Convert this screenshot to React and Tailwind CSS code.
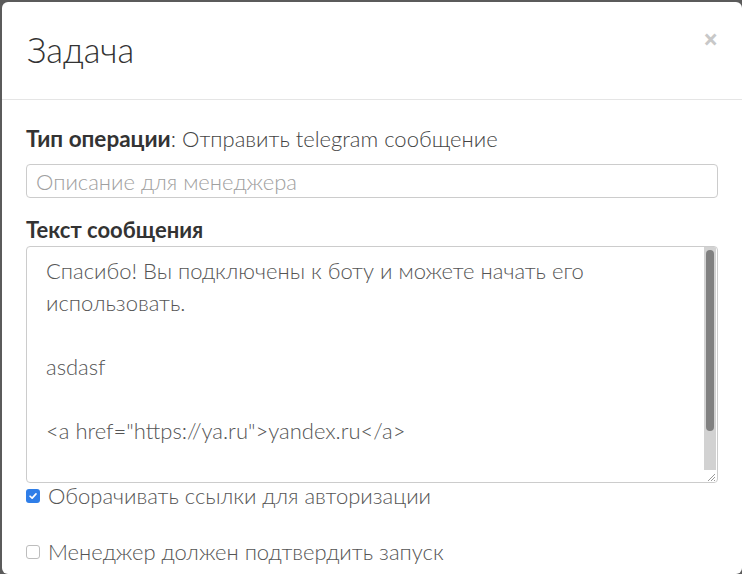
import React from 'react'

const FONT = { fontFamily: 'Lato, "Open Sans", sans-serif' }

function CheckBox({ checked }) {
  if (checked) {
    return (
      <span className="grid size-[14px] shrink-0 place-items-center rounded-[3px] bg-[#2f7ee8]">
        <svg viewBox="0 0 12 12" className="size-[10px]" fill="none" stroke="white" strokeWidth="2" strokeLinecap="round" strokeLinejoin="round">
          <path d="M2.5 6.3 L5 8.6 L9.6 3.4" />
        </svg>
      </span>
    )
  }
  return <span className="size-[14px] shrink-0 rounded-[3px] border border-[#bdbdbd] bg-white" />
}

function MessageBox() {
  const lines = [
    'Спасибо! Вы подключены к боту и можете начать его',
    'использовать.',
    '',
    'asdasf',
    '',
    '<a href="https://ya.ru">yandex.ru</a>',
  ]

  return (
    <div className="flex h-[237px] overflow-hidden rounded-[4px] border border-[#cccccc]">
      <div className="flex-1 px-[19px] pt-[8px] text-[22px] font-light leading-[32px] text-[#555555]">
        {lines.map((line, i) => (
          <div key={i} className="h-[32px] whitespace-pre">{line}</div>
        ))}
      </div>
      <div className="mr-[1px] flex w-[12px] shrink-0 flex-col bg-[#d2d2d2]">
        <div className="mx-auto mt-[3px] h-[181px] w-[8px] rounded-full bg-[#808080]" />
        <div className="flex-1" />
        <svg viewBox="0 0 12 12" className="size-[12px] bg-white">
          <path d="M11 4 L4 11 M11 7 L7 11 M11 10 L10 11" stroke="#9a9a9a" strokeWidth="1" />
        </svg>
      </div>
    </div>
  )
}

export default function App() {
  return (
    <div className="h-[574px] w-[742px] overflow-hidden bg-[#5b5b5b] pl-[2px] pt-[2px]" style={FONT}>
      <div className="h-full rounded-[6px] bg-white">
        <div className="flex h-[98px] items-center justify-between border-b border-[#e5e5e5] pl-[25px] pr-[24px]">
          <h1 className="-mt-[2px] text-[34.5px] font-light leading-[40px] text-[#333333]">Задача</h1>
          <span className="-mt-[24px] text-[26px] font-bold leading-none text-[#c8c8c8]" style={{ fontFamily: '"Open Sans", sans-serif' }}>×</span>
        </div>

        <div className="px-[24px] pt-[27px]">
          <p className="text-[22px] font-light leading-[24px] text-[#444444]">
            <span className="text-[22.5px] font-bold text-[#333333]">Тип операции</span>: Отправить telegram сообщение
          </p>

          <div className="mt-[13px] flex h-[34px] items-center rounded-[4px] border border-[#cccccc] px-[9px] text-[22px] font-light text-[#a0a0a0]">
            Описание для менеджера
          </div>

          <p className="mt-[20px] text-[22px] font-bold leading-[24px] text-[#333333]">Текст сообщения</p>

          <div className="mt-[4px]">
            <MessageBox />
          </div>

          <label className="mt-[1px] flex items-center gap-[8px] text-[22px] font-light leading-[24px] text-[#555555]">
            <CheckBox checked />
            Оборачивать ссылки для авторизации
          </label>

          <label className="mt-[32px] flex items-center gap-[8px] text-[22px] font-light leading-[24px] text-[#555555]">
            <CheckBox />
            Менеджер должен подтвердить запуск
          </label>
        </div>
      </div>
    </div>
  )
}
